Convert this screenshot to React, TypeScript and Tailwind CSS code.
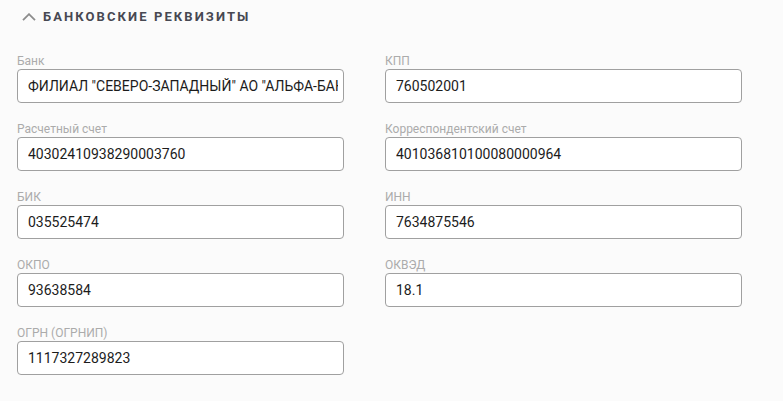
interface Field {
  label: string;
  value: string;
}

const leftFields: Field[] = [
  { label: 'Банк', value: 'ФИЛИАЛ "СЕВЕРО-ЗАПАДНЫЙ" АО "АЛЬФА-БАНК"' },
  { label: 'Расчетный счет', value: '40302410938290003760' },
  { label: 'БИК', value: '035525474' },
  { label: 'ОКПО', value: '93638584' },
  { label: 'ОГРН (ОГРНИП)', value: '1117327289823' },
];

const rightFields: Field[] = [
  { label: 'КПП', value: '760502001' },
  { label: 'Корреспондентский счет', value: '401036810100080000964' },
  { label: 'ИНН', value: '7634875546' },
  { label: 'ОКВЭД', value: '18.1' },
];

function FormField({ label, value }: Field) {
  return (
    <label className="flex flex-col">
      <span className="text-[12px] leading-[16px] text-[#ababab]">{label}</span>
      <input
        readOnly
        value={value}
        className="h-[34px] w-full rounded-[4px] border border-[#a0a0a0] bg-white pl-[10px] pr-[5px] text-[14px] text-[#1c1c1c] outline-none"
      />
    </label>
  );
}

export default function App() {
  return (
    <div className="min-h-[401px] bg-[#fbfbfb] font-['Roboto',sans-serif]">
      {/* Section header */}
      <div className="flex items-center gap-[7px] pl-[22px] pt-[8px]">
        <svg width="14" height="8" viewBox="0 0 14 8" className="shrink-0">
          <path d="M1 7.2 L7 1.2 L13 7.2" stroke="#8c8c8c" strokeWidth="1.8" fill="none" />
        </svg>
        <h2 className="text-[13px] leading-[17px] font-bold tracking-[0.16em] text-[#474852]">
          БАНКОВСКИЕ РЕКВИЗИТЫ
        </h2>
      </div>

      {/* Fields */}
      <div className="mt-[28px] flex gap-[41px] pl-[17px]">
        <div className="flex w-[327px] flex-col gap-[18px]">
          {leftFields.map((f) => (
            <FormField key={f.label} {...f} />
          ))}
        </div>
        <div className="flex w-[357px] flex-col gap-[18px]">
          {rightFields.map((f) => (
            <FormField key={f.label} {...f} />
          ))}
        </div>
      </div>
    </div>
  );
}
